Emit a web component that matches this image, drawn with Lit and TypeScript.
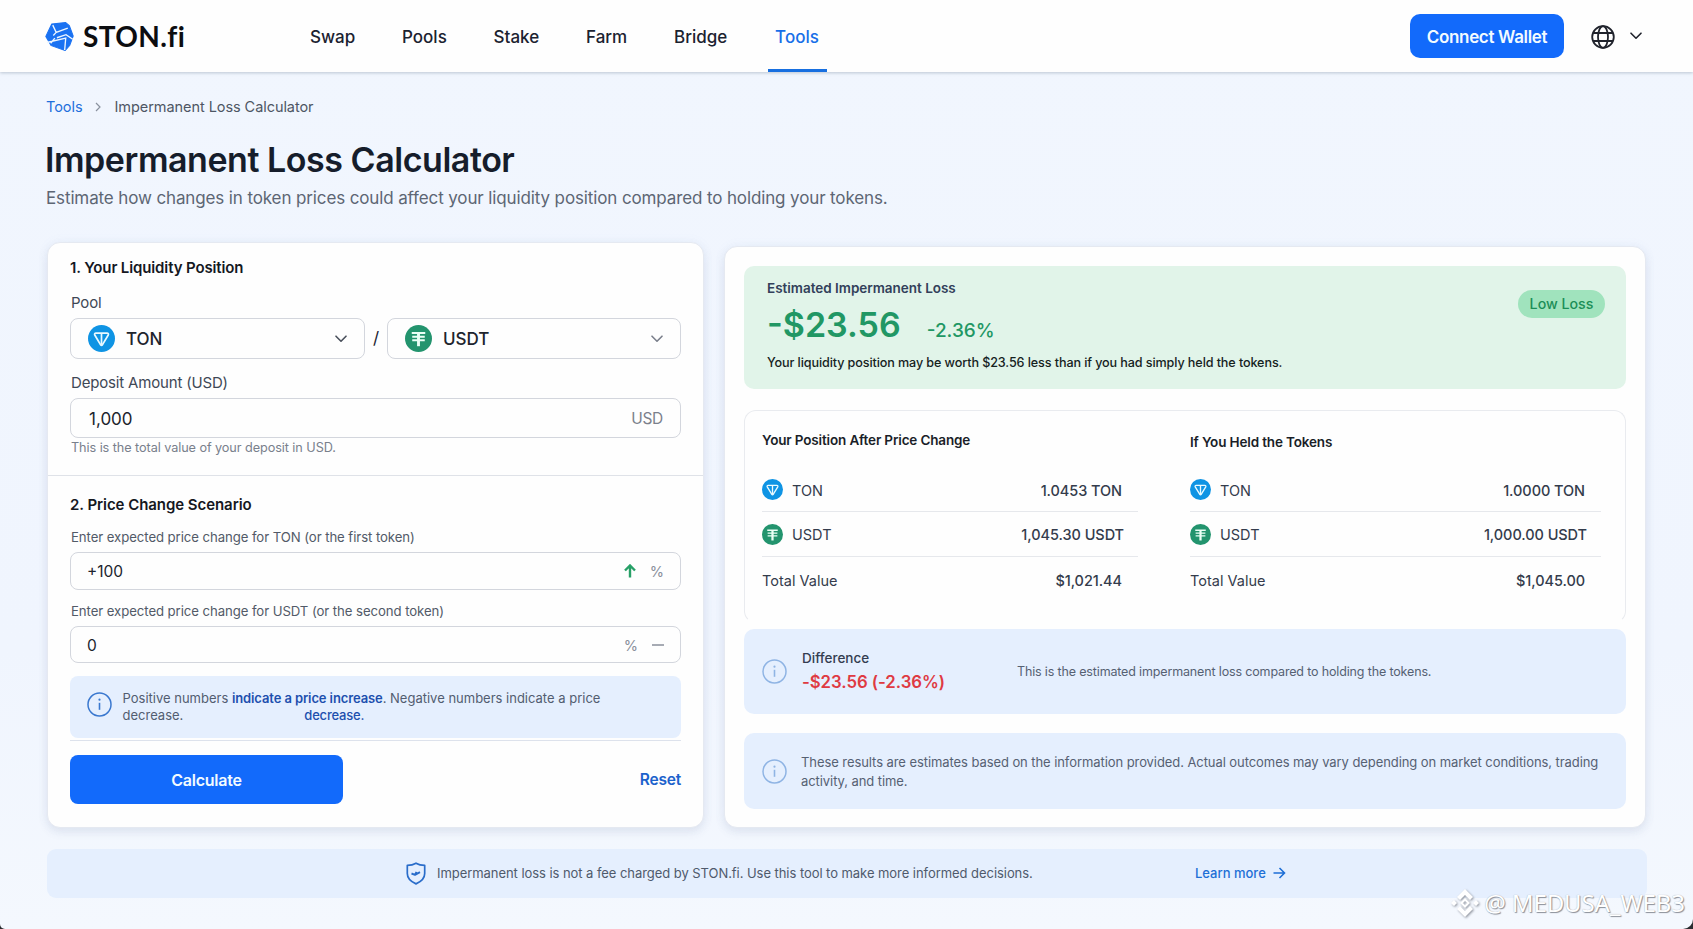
import { LitElement, html, css, svg } from "lit";
import { customElement } from "lit/decorators.js";

const ton = (s: number) => html`<svg width=${s} height=${s} viewBox="0 0 28 28" fill="none">
  <circle cx="14" cy="14" r="14" fill="#0f94e4"/>
  <path d="M8.2 8.4h11.6c1.1 0 1.7 1.1 1.2 2L14.9 20.6c-.4.7-1.4.7-1.8 0L7 10.4c-.5-.9.1-2 1.2-2z" stroke="#eafaff" stroke-width="1.8" stroke-linejoin="round"/>
  <path d="M14 8.6v12" stroke="#eafaff" stroke-width="1.8"/></svg>`;
const usdt = (s: number) => html`<svg width=${s} height=${s} viewBox="0 0 28 28" fill="none">
  <circle cx="14" cy="14" r="14" fill="#23946e"/>
  <path d="M7 8.3h14M7.5 12.2h13M7.5 15.8h13" stroke="#eafff6" stroke-width="1.9"/>
  <path d="M14 8v14" stroke="#eafff6" stroke-width="3"/></svg>`;
const chevron = (c: string) => html`<svg width="12" height="8" viewBox="0 0 12 8" fill="none">
  <path d="M1 1.2l5 5 5-5" stroke=${c} stroke-width="1.6" stroke-linecap="round" stroke-linejoin="round"/></svg>`;
const info = (c: string) => html`<svg class="info" width="25" height="25" viewBox="0 0 25 25" fill="none">
  <circle cx="12.5" cy="12.5" r="11.5" stroke=${c} stroke-width="1.5"/>
  ${svg`<path d="M12.5 10.8v7" stroke=${c} stroke-width="1.6"/><circle cx="12.5" cy="7.7" r="1.1" fill=${c}/>`}</svg>`;

@customElement("app-root")
export class AppRoot extends LitElement {
  static styles = css`
    :host { display: block; height: 929px; background: #2a2c30; font-family: Inter, sans-serif; color: #1b2230; overflow: hidden; position: relative; }
    * { box-sizing: border-box; }
    svg { flex: none; display: block; }
    .page { height: 929px; background: linear-gradient(#f1f6fe, #f0f5fe 70%, #f4f8fe); border-radius: 0 0 10px 5px; }
    header { height: 72px; background: #fefefe; display: flex; align-items: center; padding: 0 51px 0 45px; box-shadow: 0 1px 3px rgba(90,110,130,.35); }
    .logo { width: 265px; display: flex; align-items: center; gap: 9px; }
    .brand { font: 700 28px/32px Lato, sans-serif; letter-spacing: .4px; color: #0c0d10; }
    nav { display: flex; gap: 46.8px; height: 72px; flex: 1; }
    nav a { font-size: 17px; font-weight: 500; line-height: 74px; height: 72px; }
    nav a.on { color: #176fe8; margin-left: -6px; padding: 0 8px 0 7px; border-bottom: 3px solid #176fe0; }
    .wallet { width: 154px; height: 44px; border-radius: 10px; background: #126afb; color: #f2fbff; font-size: 17px; font-weight: 600; letter-spacing: -.33px; display: flex; align-items: center; justify-content: center; }
    .wallet span { padding-top: 1px; }
    .globe { margin: 1px 15px 0 27px; }
    main { padding: 25px 46px 0 47px; }
    .crumbs { display: flex; align-items: center; font-size: 14.5px; letter-spacing: -.06px; line-height: 20px; height: 20px; color: #4e5664; margin-left: -1px; }
    .crumbs a { color: #1e70dc; }
    .crumbs svg { margin: 0 13px 0 13px; }
    h1 { margin: 23px 0 6px -2px; font-size: 34px; line-height: 40px; font-weight: 600; letter-spacing: -.46px; color: #161d2b; }
    .sub { font-size: 17px; line-height: 24px; letter-spacing: -.124px; color: #5d6674; margin-left: -1px; }
    .cols { display: grid; grid-template-columns: 657px 922px; gap: 20px; margin-top: 32px; }
    .card { background: #fefefe; border: 1px solid #e5e9f1; border-radius: 13px; box-shadow: 0 4px 10px rgba(90,105,140,.12), 0 0 12px rgba(120,150,220,.06); }
    .left { height: 586px; padding-top: 15px; }
    .sec { padding: 0 22px; }
    h2 { margin: 0; font-size: 15px; line-height: 20px; font-weight: 600; letter-spacing: -.125px; color: #15181f; }
    h2.two { letter-spacing: -.06px; }
    .lab { font-size: 15px; line-height: 20px; letter-spacing: -.17px; color: #3f4856; padding-left: 1px; }
    .pool { margin-top: 15px; }
    .selects { margin-top: 5px; height: 41px; display: grid; grid-template-columns: 295px 22px 294px; }
    .slash { text-align: center; font-size: 17px; line-height: 41px; }
    .box { border: 1px solid #d3d6dd; border-radius: 8px; display: flex; align-items: center; padding: 0 17px; background: #fefefe; font-size: 17px; color: #20242d; }
    .box .v { flex: 1; }
    .sel .v { margin-left: 11px; font-weight: 500; padding-top: 1px; }
    .dep { margin-top: 14px; }
    .in1 { margin-top: 5px; height: 40px; }
    .in1 .v { padding-left: 1px; }
    .in1 span { padding-top: 1px; }
    .in1 .unit { font-size: 15.5px; letter-spacing: -.3px; color: #7b808c; }
    .hint { font-size: 12.7px; line-height: 20px; letter-spacing: -.08px; color: #79808c; padding-left: 1px; }
    .rule { height: 1px; background: #dfe2e8; margin: 17px 0 19px; }
    .lab2 { font-size: 13.2px; line-height: 20px; letter-spacing: -.08px; color: #525a68; margin-top: 12px; padding-left: 1px; }
    .in2 { margin-top: 5px; height: 38px; font-size: 15.5px; gap: 14px; padding: 0 16px; }
    .in3 { height: 37px; padding-top: 1px; }
    .second { margin-top: 11px; }
    .pct { font-size: 14.5px; color: #8a8f9b; }
    .tip { margin-top: 13px; height: 62px; background: #e5effe; border-radius: 8px; display: flex; padding: 0 17px; font-size: 13px; line-height: 17px; color: #525d70; align-items: center; }
    .tip .info { margin-top: -5px; }
    .tip .tx { margin-left: 10.5px; }
    .tip b { color: #1d4fae; font-weight: 600; letter-spacing: -.11px; }
    .tip .row2 { display: flex; gap: 121px; }
    .tip .row2 b { font-weight: 500; letter-spacing: -.2px; }
    .thin { height: 1px; background: #dde2ec; margin: 2px 0 14px; }
    .acts { display: flex; justify-content: space-between; align-items: center; color: #1c62cc; font-size: 16px; font-weight: 600; }
    .acts a { font-size: 15.5px; letter-spacing: -.2px; }
    .calc { width: 273px; height: 49px; background: #126afb; border-radius: 8px; color: #f2fbff; letter-spacing: -.22px; display: flex; align-items: center; justify-content: center; }
    .right { margin-top: 4px; height: 582px; padding: 19px 19px 0; }
    .green { height: 123px; background: #e1f4e9; border-radius: 10px; display: flex; justify-content: space-between; padding: 12px 21px 0 23px; }
    .est { font-size: 13.5px; line-height: 20px; font-weight: 600; color: #32405a; letter-spacing: -.02px; }
    .big { display: flex; align-items: baseline; gap: 26px; margin: 7px 0 8px; color: #219764; height: 40px; line-height: 40px; }
    .big b { font-size: 34px; font-weight: 600; }
    .big span { font-size: 19px; font-weight: 500; line-height: 37px; }
    .worth { font-size: 12.6px; line-height: 20px; font-weight: 500; letter-spacing: -.1px; color: #15221d; }
    .badge { margin-top: 12px; width: 87px; height: 28px; border-radius: 14px; background: #a0e3bd; color: #1b8e57; font-size: 14.2px; font-weight: 500; display: flex; align-items: center; justify-content: center; }
    .badge span { margin-top: -1px; }
    .table { margin-top: 21px; height: 213px; border: 1px solid #e9ebef; border-bottom-color: transparent; border-radius: 12px; display: grid; grid-template-columns: 376px 411px; gap: 52px; padding: 19px 0 0 17px; }
    h3 { margin: 0; font-size: 13.5px; line-height: 20px; font-weight: 600; letter-spacing: -.15px; color: #1a1e28; }
    .held h3 { padding-top: 2px; height: 20px; }
    .tr { display: flex; align-items: center; gap: 9px; height: 44px; padding-right: 16px; border-bottom: 1px solid #e6e8ec; font-size: 14.5px; color: #343c4c; }
    .tr span { padding-top: 1px; }
    .tr .v { margin-left: auto; font-weight: 500; letter-spacing: -.06px; }
    .tr.a { margin-top: 18px; }
    .tr.b { padding-right: 14px; height: 45px; }
    .tr.c { height: 47px; border: 0; }
    .tr.c span { padding-top: 0; }
    .diff { margin-top: 6px; height: 85px; background: #e5effe; border-radius: 10px; display: flex; align-items: center; padding: 0 17px; }
    .diff .info, .note .info { margin-left: 1px; margin-right: -1px; }
    .diff .d { margin-left: 16px; width: 215px; font-size: 13.5px; font-weight: 500; line-height: 20px; color: #333d50; margin-top: -1px; }
    .diff .red { font-size: 16.8px; font-weight: 600; letter-spacing: -.05px; line-height: 28px; height: 27px; color: #df3a42; }
    .small { font-size: 13px; line-height: 19px; letter-spacing: -.075px; color: #566173; }
    .dt { font-size: 12.5px; letter-spacing: -.15px; }
    .note { margin-top: 19px; height: 76px; background: #e5effe; border-radius: 10px; display: flex; align-items: center; padding: 1px 17px 0; }
    .note .small { margin-left: 15px; }
    .foot { margin-top: 21px; height: 49px; background: #e5effe; border-radius: 9px; display: flex; align-items: center; padding-left: 359px; font-size: 13px; letter-spacing: -.055px; color: #4f5a6c; }
    .foot .msg { margin-left: 11px; width: 758px; margin-top: -2px; }
    .learn { color: #1e6fd6; font-weight: 500; display: flex; align-items: center; gap: 7px; letter-spacing: 0; margin-top: -2px; }
    .wm { position: absolute; right: 8px; bottom: 11px; display: flex; align-items: center; color: #fff; font: 400 24px/30px "Noto Sans", sans-serif; letter-spacing: -.1px; text-shadow: 1px 1px 1px #8a8f98, 0 0 1px #9ca1aa; }
    .wm svg { margin-right: 5px; filter: drop-shadow(1px 1px 1px #8d929c); }
  `;
  col(title: string, rows: string[], cls: string) {
    return html`<div class=${cls}><h3>${title}</h3>
      <div class="tr a">${ton(21)}<span>TON</span><span class="v">${rows[0]}</span></div>
      <div class="tr b">${usdt(21)}<span>USDT</span><span class="v">${rows[1]}</span></div>
      <div class="tr c"><span>Total Value</span><span class="v">${rows[2]}</span></div></div>`;
  }
  render() {
    return html`<div class="page">
      <header>
        <div class="logo">
          <svg width="29" height="29" viewBox="0 0 28 28" fill="none">
            <path d="M6.5 2L20 .6 23.5 3.5l3.7 10-3.4 9.2L19.5 27.5 6 22.8.8 14z" fill="#1a72f2" stroke="#1a72f2" stroke-linejoin="round"/>
            <path d="M7.5 3l3.3 7L22 5.8M10.8 10L8 13M11.5 15.2l8.8-3 6.5 4.5M1.8 19.8L20 15.5l-1 11.5M5.5 20.5l4-5" stroke="#eef7ff" stroke-width="1.3"/></svg>
          <span class="brand">STON.fi</span>
        </div>
        <nav><a>Swap</a><a>Pools</a><a>Stake</a><a>Farm</a><a>Bridge</a><a class="on">Tools</a></nav>
        <div class="wallet"><span>Connect Wallet</span></div>
        <svg class="globe" width="24" height="24" viewBox="0 0 24 24" fill="none" stroke="#20232c" stroke-width="1.8">
          <circle cx="12" cy="12" r="10.8"/><ellipse cx="12" cy="12" rx="5" ry="10.8"/><path d="M2 8h20M2 16h20"/></svg>
        ${chevron("#20232c")}
      </header>
      <main>
        <div class="crumbs"><a>Tools</a>
          <svg width="6" height="10" viewBox="0 0 6 10" fill="none"><path d="M1 1l4 4-4 4" stroke="#8a919e" stroke-width="1.2"/></svg>
          <span>Impermanent Loss Calculator</span></div>
        <h1>Impermanent Loss Calculator</h1>
        <div class="sub">Estimate how changes in token prices could affect your liquidity position compared to holding your tokens.</div>
        <div class="cols">
          <section class="card left">
            <div class="sec">
              <h2>1. Your Liquidity Position</h2>
              <div class="lab pool">Pool</div>
              <div class="selects">
                <div class="box sel">${ton(27)}<span class="v">TON</span>${chevron("#4a505c")}</div>
                <div class="slash">/</div>
                <div class="box sel">${usdt(27)}<span class="v">USDT</span>${chevron("#7a7f8b")}</div>
              </div>
              <div class="lab dep">Deposit Amount (USD)</div>
              <div class="box in1"><span class="v">1,000</span><span class="unit">USD</span></div>
              <div class="hint">This is the total value of your deposit in USD.</div>
            </div>
            <div class="rule"></div>
            <div class="sec">
              <h2 class="two">2. Price Change Scenario</h2>
              <div class="lab2">Enter expected price change for TON (or the first token)</div>
              <div class="box in2"><span class="v">+100</span>
                <svg width="12" height="14" viewBox="0 0 12 14" fill="none"><path d="M6 13.5V2M1 6.5l5-5 5 5" stroke="#27a067" stroke-width="2.4"/></svg>
                <span class="pct">%</span></div>
              <div class="lab2 second">Enter expected price change for USDT (or the second token)</div>
              <div class="box in2 in3"><span class="v">0</span><span class="pct">%</span>
                <svg width="12" height="2" viewBox="0 0 12 2"><path d="M0 1h12" stroke="#8a8f9b" stroke-width="1.5"/></svg></div>
              <div class="tip">${info("#3a78cf")}<div class="tx">
                <div class="row1">Positive numbers <b>indicate a price increase</b>. Negative numbers indicate a price</div>
                <div class="row2"><span>decrease.</span><b>decrease.</b></div></div></div>
              <div class="thin"></div>
              <div class="acts"><div class="calc"><span>Calculate</span></div><a>Reset</a></div>
            </div>
          </section>
          <section class="card right">
            <div class="green">
              <div><div class="est">Estimated Impermanent Loss</div>
                <div class="big"><b>-$23.56</b><span>-2.36%</span></div>
                <div class="worth">Your liquidity position may be worth $23.56 less than if you had simply held the tokens.</div></div>
              <div class="badge"><span>Low Loss</span></div>
            </div>
            <div class="table">
              ${this.col("Your Position After Price Change", ["1.0453 TON", "1,045.30 USDT", "$1,021.44"], "pos")}
              ${this.col("If You Held the Tokens", ["1.0000 TON", "1,000.00 USDT", "$1,045.00"], "held")}
            </div>
            <div class="diff">${info("#8fb4e4")}
              <div class="d">Difference<div class="red">-$23.56 (-2.36%)</div></div>
              <div class="small dt">This is the estimated impermanent loss compared to holding the tokens.</div></div>
            <div class="note">${info("#8fb4e4")}
              <div class="small"><div>These results are estimates based on the information provided. Actual outcomes may vary depending on market conditions, trading</div><div>activity, and time.</div></div></div>
          </section>
        </div>
        <div class="foot">
          <svg width="20" height="23" viewBox="0 0 20 23" fill="none" stroke="#2a6dca" stroke-width="1.7" stroke-linejoin="round"><path d="M10 1.2c2.6 1.6 5.5 2.2 8.7 2.2v8.2c0 5-3.2 8-8.7 10.3C4.5 19.6 1.3 16.6 1.3 11.6V3.4c3.2 0 6.1-.6 8.7-2.2z"/><path d="M5.5 11.5l3.5 1.3 5-2.6M9 12.8l1.5-3" stroke-width="1.9"/></svg>
          <span class="msg">Impermanent loss is not a fee charged by STON.fi. Use this tool to make more informed decisions.</span>
          <a class="learn"><span>Learn more</span><svg width="13" height="12" viewBox="0 0 13 12" fill="none"><path d="M.5 6h11M6.5 1l5 5-5 5" stroke="#1e6fd6" stroke-width="1.6"/></svg></a>
        </div>
      </main>
    </div>
    <div class="wm"><svg width="28" height="28" viewBox="0 0 28 28" fill="#fff"><path d="M14 0l8 8-3 3-5-5-5 5-3-3zM14 28l-8-8 3-3 5 5 5-5 3 3zM3 11l3 3-3 3-3-3zM25 11l3 3-3 3-3-3z"/><path d="M14 10.5l3.5 3.5-3.5 3.5-3.5-3.5z" fill="none" stroke="#fff" stroke-width="2"/></svg><span>@&nbsp;MEDUSA_WEB3</span></div>`;
  }
}
